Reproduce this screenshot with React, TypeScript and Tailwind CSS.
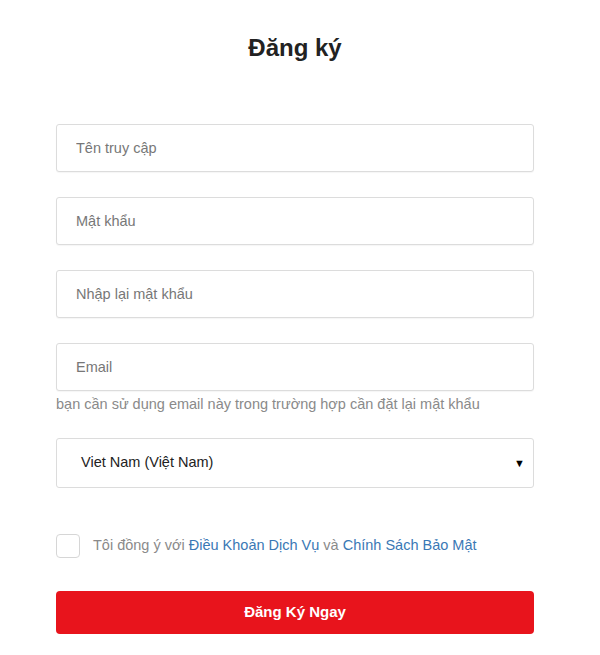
const font = { fontFamily: '"Liberation Sans", Arial, sans-serif' };

function Field({ placeholder }: { placeholder: string }) {
  return (
    <input
      type="text"
      placeholder={placeholder}
      className="block w-full h-12 rounded-[3px] border border-[#dcdcdc] bg-white px-[19px] text-[14.5px] text-[#333] placeholder:text-[#777] outline-none shadow-[0_1px_1px_rgba(0,0,0,0.04)]"
    />
  );
}

export default function App() {
  return (
    <div className="min-h-screen bg-white" style={font}>
      <div className="w-[478px] ml-[56px] pt-[32px]">
        <h1 className="text-center text-[24px] leading-8 font-bold text-[#222]">Đăng ký</h1>

        <form className="mt-[60px] flex flex-col">
          <Field placeholder="Tên truy cập" />
          <div className="mt-[25px]">
            <Field placeholder="Mật khẩu" />
          </div>
          <div className="mt-[25px]">
            <Field placeholder="Nhập lại mật khẩu" />
          </div>
          <div className="mt-[25px]">
            <Field placeholder="Email" />
          </div>
          <p className="mt-[3px] text-[14.5px] leading-5 text-[#8a8a8a]">
            bạn cần sử dụng email này trong trường hợp cần đặt lại mật khẩu
          </p>

          <div className="mt-[24px] h-[50px] rounded-[3px] border border-[#dcdcdc] flex items-center justify-between pl-[24px] pr-[8px] text-[14.5px] text-[#222]">
            <span>Viet Nam (Việt Nam)</span>
            <span className="text-[11px] text-black">▼</span>
          </div>

          <label className="mt-[46px] flex items-center gap-[13px] text-[14.5px] text-[#8a8a8a]">
            <span className="w-6 h-6 rounded-[4px] border border-[#d6d6d6] bg-white shrink-0" />
            <span>
              Tôi đồng ý với <span className="text-[#3a78b5]">Điều Khoản Dịch Vụ</span> và{' '}
              <span className="text-[#3a78b5]">Chính Sách Bảo Mật</span>
            </span>
          </label>

          <button
            type="button"
            className="mt-[33px] h-[43px] w-full rounded-[4px] bg-[#e8141c] text-white text-[15px] font-bold"
          >
            Đăng Ký Ngay
          </button>
        </form>
      </div>
    </div>
  );
}
